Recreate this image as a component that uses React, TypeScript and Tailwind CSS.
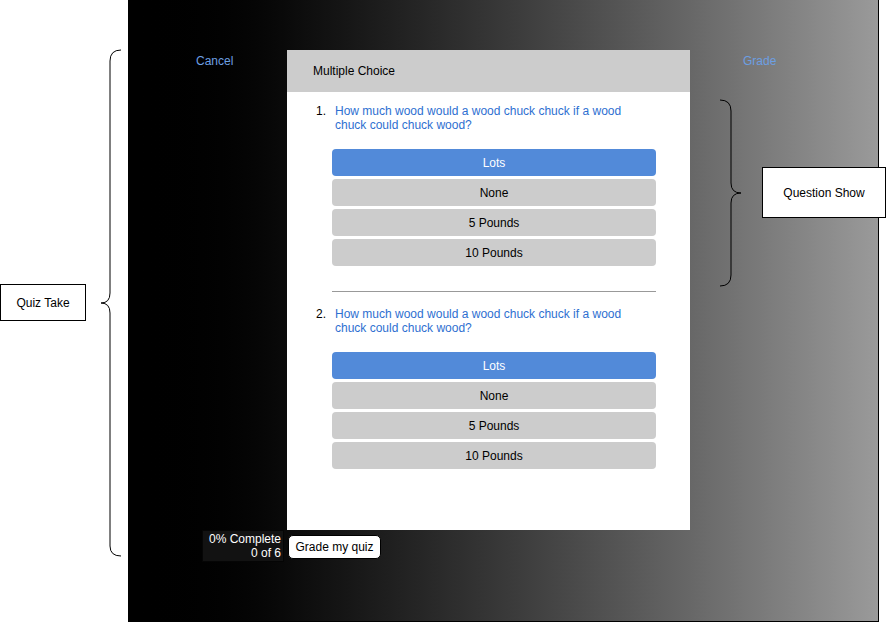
const font = { fontFamily: '"Liberation Sans", Arial, sans-serif' };

const options = ["Lots", "None", "5 Pounds", "10 Pounds"];

function Question({ n }: { n: number }) {
  return (
    <div>
      <div className="flex items-baseline pl-[29px]">
        <span className="w-[19px] text-[12px] text-black">{n}.</span>
        <p className="w-[300px] text-[12px] leading-[14px] text-[#2e6fd1]">
          How much wood would a wood chuck chuck if a wood chuck could chuck wood?
        </p>
      </div>
      <div className="mt-[17px] ml-[45px] flex w-[324px] flex-col gap-[3px]">
        {options.map((o, i) => (
          <div
            key={o}
            className={`flex h-[27px] items-center justify-center rounded-[4px] text-[12px] ${
              i === 0 ? "bg-[#528ad9] text-white" : "bg-[#cccccc] text-black"
            }`}
          >
            {o}
          </div>
        ))}
      </div>
    </div>
  );
}

function Braces() {
  return (
    <svg className="pointer-events-none absolute inset-0" width="886" height="622">
      <path
        d="M121 50 Q110 50 110 61 L110 293 Q110 303 101 303 Q110 303 110 313 L110 546 Q110 556 121 556"
        fill="none"
        stroke="#000"
        strokeWidth="1"
      />
      <path
        d="M720 100 Q731 100 731 111 L731 183 Q731 193 741 193 Q731 193 731 203 L731 275 Q731 286 720 286"
        fill="none"
        stroke="#000"
        strokeWidth="1"
      />
    </svg>
  );
}

export default function App() {
  return (
    <div className="relative h-[622px] w-[886px] overflow-hidden bg-white" style={font}>
      <div className="absolute left-[128px] top-0 flex h-[622px] w-[751px] flex-col border-r border-b border-black bg-gradient-to-r from-black to-[#9a9a9a] pt-[50px]">
        <div className="flex">
          <div className="w-[159px] pl-[68px] pt-[2px] text-[12px] text-[#6c9fe3]">Cancel</div>
          <div className="flex h-[480px] w-[403px] flex-col bg-white">
            <div className="flex h-[42px] items-center bg-[#cccccc] pl-[26px] text-[12px] text-black">
              Multiple Choice
            </div>
            <div className="pt-[10px]">
              <Question n={1} />
            </div>
            <div className="mt-[25px] ml-[45px] h-px w-[324px] bg-[#999999]" />
            <div className="pt-[13px]">
              <Question n={2} />
            </div>
          </div>
          <div className="pl-[53px] pt-[2px] text-[12px] text-[#6c9fe3]">Grade</div>
        </div>
        <div className="flex pl-[74px]">
          <div className="flex h-[32px] w-[82px] flex-col items-end justify-center border border-[#050505] bg-[#121212] pr-[2px] text-[12px] leading-[14px] text-white">
            <span>0% Complete</span>
            <span>0 of 6</span>
          </div>
          <div className="ml-[4px] mt-[5px] flex h-[24px] w-[93px] items-center justify-center rounded-[5px] border border-black bg-white text-[12px] text-black">
            Grade my quiz
          </div>
        </div>
      </div>

      <Braces />

      <div className="absolute left-0 top-[284px] flex h-[37px] w-[86px] items-center justify-center border border-black bg-white text-[12px] text-black">
        Quiz Take
      </div>
      <div className="absolute left-[762px] top-[167px] flex h-[51px] w-[124px] items-center justify-center border border-black bg-white text-[12px] text-black">
        Question Show
      </div>
    </div>
  );
}
